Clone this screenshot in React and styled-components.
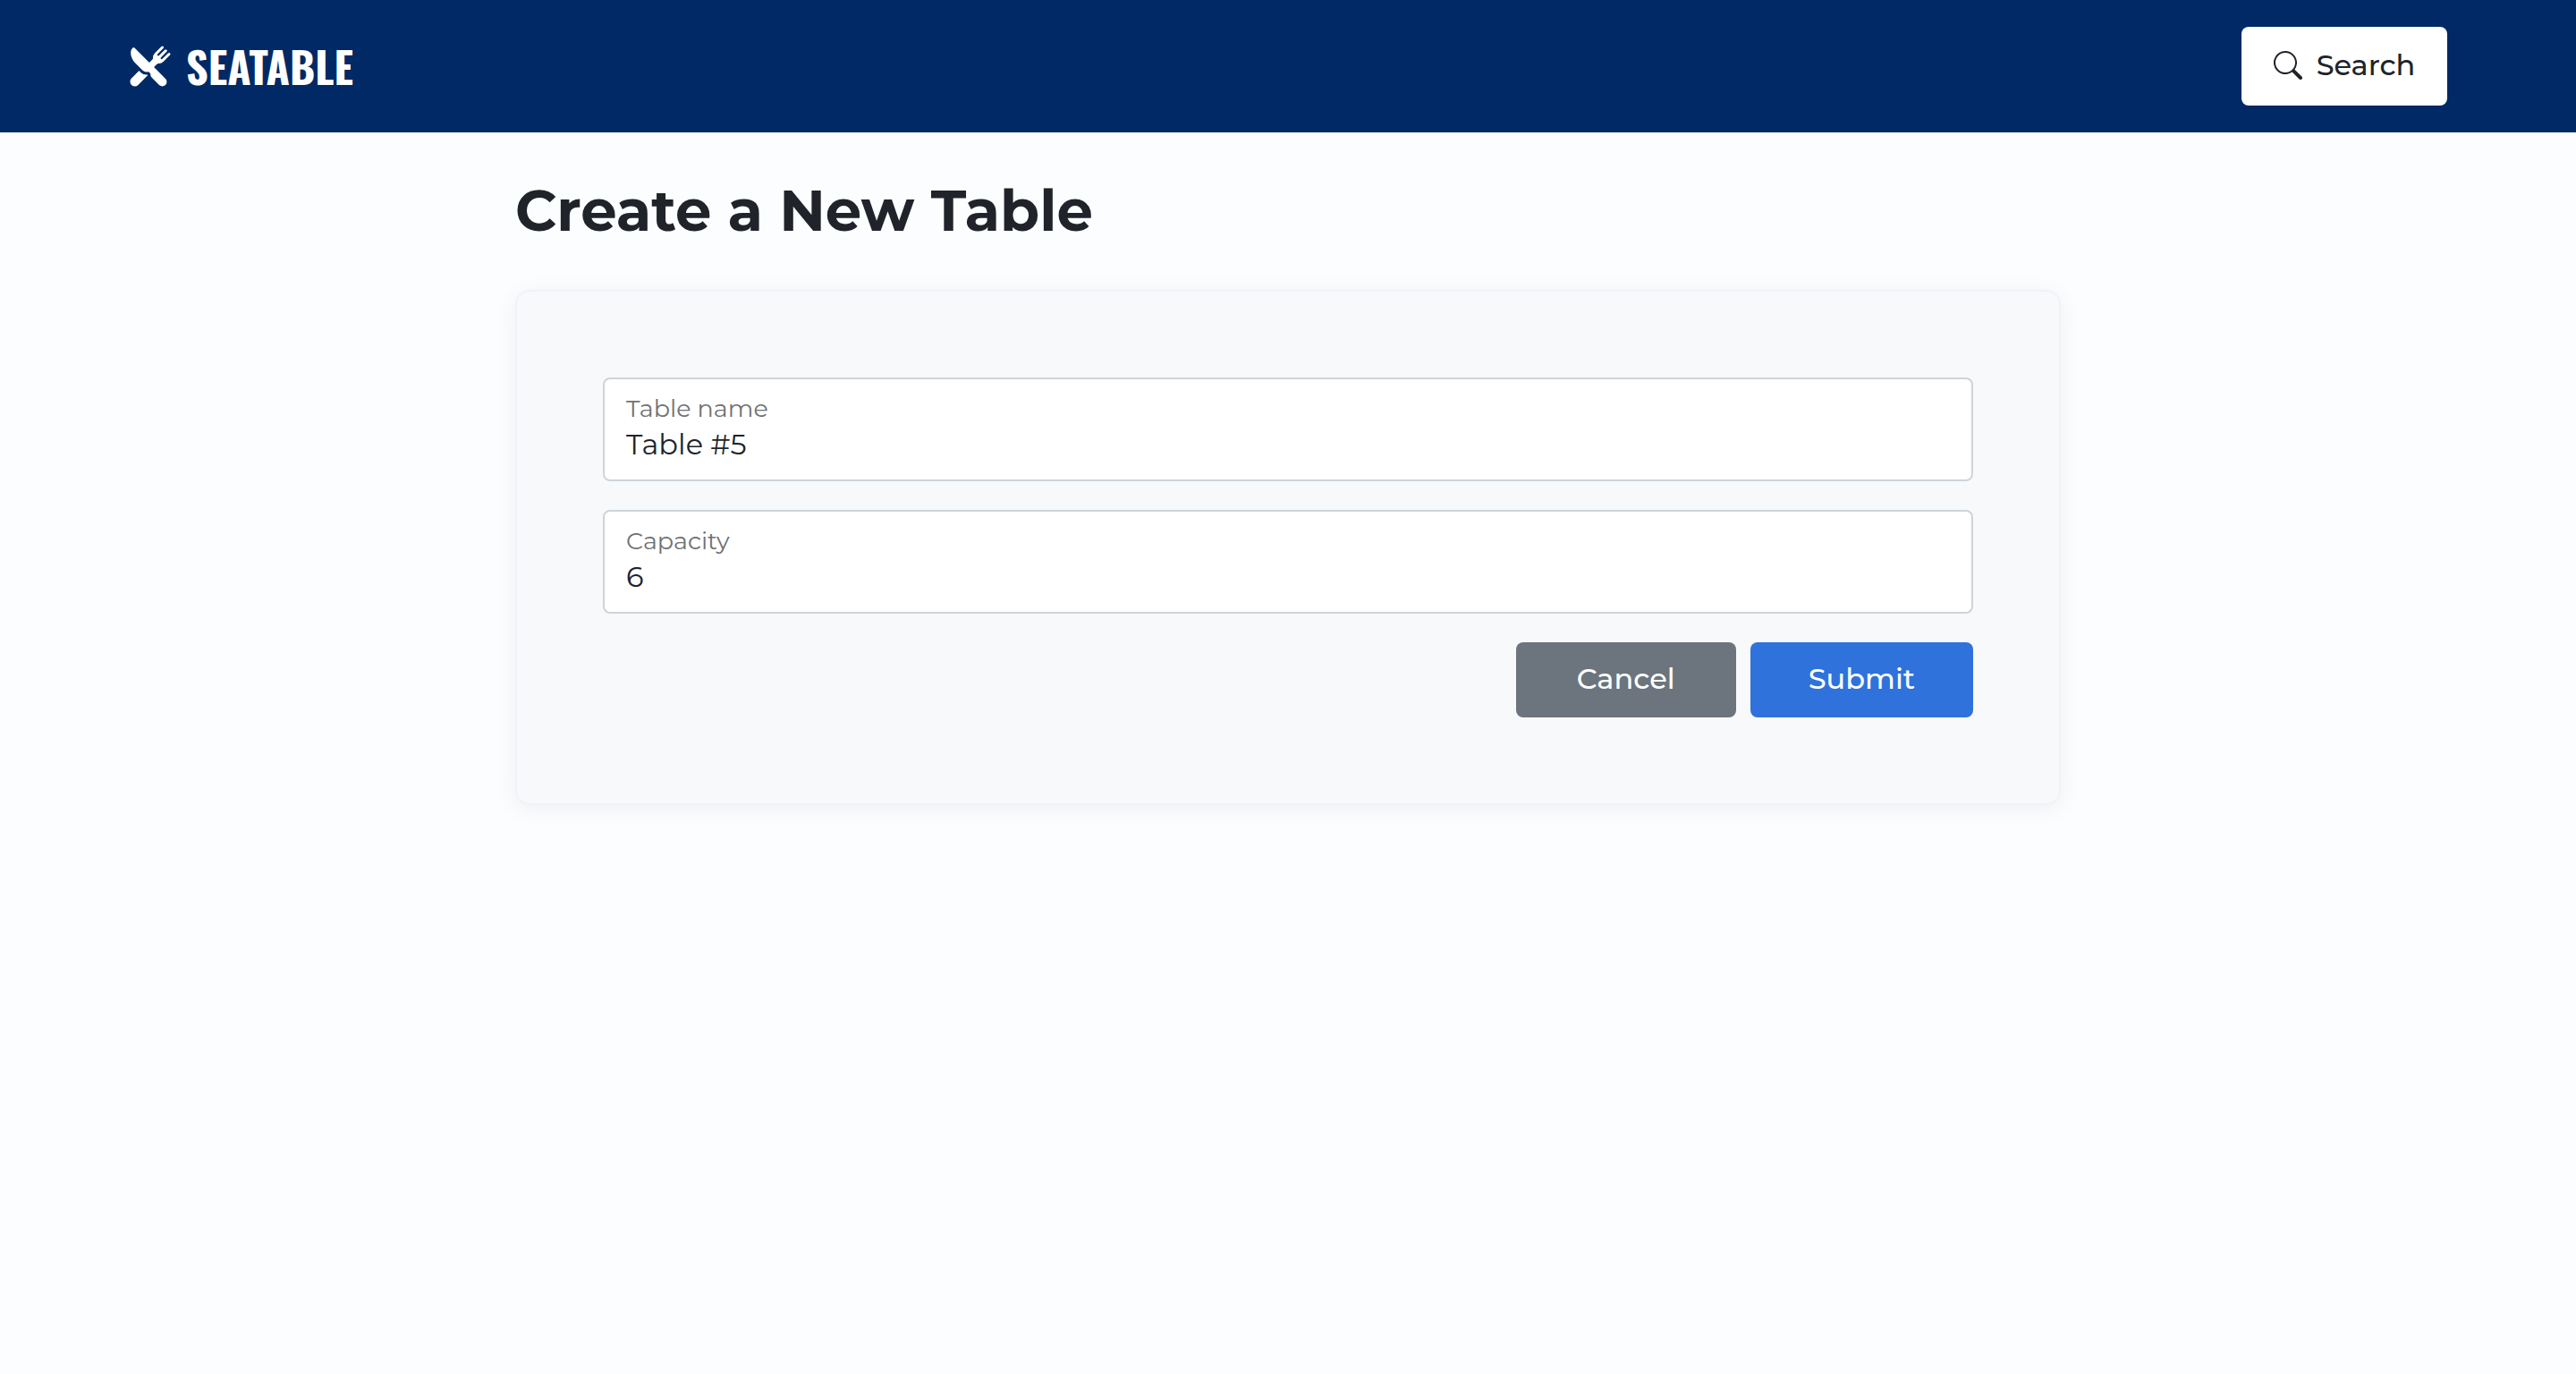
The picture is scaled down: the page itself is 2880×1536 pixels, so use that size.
import React, { useState } from "react";
import styled, { createGlobalStyle } from "styled-components";
import { IoRestaurant } from "react-icons/io5";
import { BsSearch } from "react-icons/bs";

const GlobalStyle = createGlobalStyle`
  *, *::before, *::after { box-sizing: border-box; }
  body {
    margin: 0;
    min-height: 100vh;
    background: #fcfdff;
    color: #20242a;
    font-family: Montserrat, Inter, "Open Sans", sans-serif;
    font-size: 32px;
    line-height: 48px;
  }
`;

const Header = styled.header`
  display: flex;
  align-items: center;
  justify-content: space-between;
  padding: 30px 5%;
  background: #002966;
`;

const Brand = styled.a`
  display: flex;
  align-items: center;
  gap: 16px;
  color: #fff;
  font-family: Oswald, "Open Sans Condensed", "Roboto Condensed", sans-serif;
  font-size: 48px;
  font-weight: 700;
  line-height: 72px;
  text-decoration: none;
`;

const Button = styled.button`
  display: inline-flex;
  align-items: center;
  justify-content: center;
  gap: 16px;
  min-width: ${(p) => (p.$wide ? "246px" : "230px")};
  padding: ${(p) => (p.$wide ? "17px 65px 19px" : "19px 32px 21px")};
  border: 0;
  border-radius: 8px;
  background: ${(p) => p.$background};
  color: ${(p) => p.$color || "#fff"};
  font: inherit;
  font-weight: 500;
  cursor: pointer;
`;

const Main = styled.main`
  width: 60%;
  margin: 0 auto;
  padding: 48px 0;
`;

const Title = styled.h1`
  margin: 0 0 50px;
  font-size: 64px;
  font-weight: 700;
  line-height: 78px;
`;

const Card = styled.form`
  display: flex;
  flex-direction: column;
  gap: 32px;
  padding: 96px;
  border: 2px solid #f0f2f9;
  border-radius: 16px;
  background: #f8f9fb;
  box-shadow: 0 4px 24px rgba(0, 0, 0, 0.06);
`;

const FieldBox = styled.div`
  display: flex;
  flex-direction: column;
  padding: 17px 24px 15px;
  border: 2px solid #ced4da;
  border-radius: 8px;
  background: #fff;
`;

const FieldLabel = styled.label`
  color: #6f7274;
  font-size: 27px;
  line-height: 32px;
`;

const FieldInput = styled.input`
  width: 100%;
  height: 48px;
  padding: 0;
  border: 0;
  outline: 0;
  background: transparent;
  color: inherit;
  font: inherit;
`;

const Actions = styled.div`
  display: flex;
  justify-content: flex-end;
  gap: 16px;
`;

function Field({ id, label, value, onChange }) {
  return (
    <FieldBox>
      <FieldLabel htmlFor={id}>{label}</FieldLabel>
      <FieldInput id={id} value={value} onChange={(e) => onChange(e.target.value)} />
    </FieldBox>
  );
}

export default function App() {
  const [name, setName] = useState("Table #5");
  const [capacity, setCapacity] = useState("6");

  return (
    <>
      <GlobalStyle />
      <Header>
        <Brand href="#">
          <IoRestaurant size={48} aria-hidden="true" />
          SEATABLE
        </Brand>
        <Button type="button" $background="#fff" $color="#20242a">
          <BsSearch size={32} aria-hidden="true" />
          Search
        </Button>
      </Header>
      <Main>
        <Title>Create a New Table</Title>
        <Card onSubmit={(e) => e.preventDefault()}>
          <Field id="table-name" label="Table name" value={name} onChange={setName} />
          <Field id="capacity" label="Capacity" value={capacity} onChange={setCapacity} />
          <Actions>
            <Button type="button" $wide $background="#6c757d">Cancel</Button>
            <Button type="submit" $wide $background="#2f72db">Submit</Button>
          </Actions>
        </Card>
      </Main>
    </>
  );
}
